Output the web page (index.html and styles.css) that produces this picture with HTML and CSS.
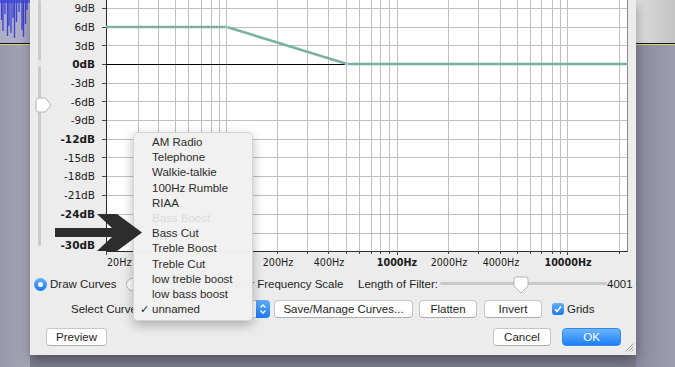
FILE: index.html
```html
<!DOCTYPE html>
<html lang="en">
<head>
    <meta charset="UTF-8">
    <meta name="viewport" content="width=device-width, initial-scale=1.0">
    <title>Equalization</title>
    <link rel="stylesheet" href="styles.css">
</head>
<body>
<div class="screen">
    <div class="host host-left">
        <div class="lane">
            <svg class="wave" width="30" height="43" viewBox="0 0 30 43">
                <path d="M0 0H30V3H0Z" fill="#5a5fd6"/>
                <path d="M1.5 0V20M3 0V31M5 0V14M7.5 0V36M9 0V26M11 0V33M13 0V18M14.5 0V38M16.5 0V22M19 0V12M22 0V30M23.5 0V37M25.5 0V24M27 0V10"
                      stroke="#3b43d4" stroke-width="1.3"/>
            </svg>
        </div>
        <div class="lane-line"></div>
        <div class="lane-edge"></div>
        <div class="lane-rest"></div>
    </div>

    <div class="dialog">
        <div class="graph-row">
            <div class="gain">
                <div class="gain-track"></div>
                <svg class="gain-thumb" width="17" height="16" viewBox="0 0 17 16">
                    <path d="M1 3.5Q1 1 3.5 1H10.5L16 8L10.5 15H3.5Q1 15 1 12.5Z" fill="#fff" stroke="#b3b3b3"/>
                </svg>
            </div>
            <svg class="plot" width="581" height="272" viewBox="55 0 581 272">
                <rect x="106" y="-1" width="522" height="252" fill="#fff"/>
                <path class="grid" d="M138.5 0V251M158.5 0V251M175.5 0V251M188.5 0V251M201.5 0V251M211.5 0V251M219.5 0V251M226.5 0V251M277.5 0V251M307.5 0V251M328.5 0V251M346.5 0V251M359.5 0V251M371.5 0V251M380.5 0V251M389.5 0V251M397.5 0V251M448.5 0V251M478.5 0V251M500.5 0V251M517.5 0V251M530.5 0V251M541.5 0V251M552.5 0V251M560.5 0V251M567.5 0V251M619.5 0V251
                   M106 8.5H628M106 27.5H628M106 45.5H628M106 83.5H628M106 101.5H628M106 120.5H628M106 139.5H628M106 157.5H628M106 176.5H628M106 195.5H628M106 214.5H628M106 233.5H628"/>
                <path class="frame" d="M627.5 0V251"/>
                <path class="axis" d="M106.5 0V252M106 251.5H628"/>
                <path class="ticks" d="M106.5 251V255M138.5 251V254M158.5 251V254M175.5 251V254M188.5 251V254M201.5 251V254M211.5 251V254M219.5 251V254M226.5 251V255M277.5 251V254M307.5 251V254M328.5 251V254M346.5 251V254M359.5 251V254M371.5 251V254M380.5 251V254M389.5 251V254M397.5 251V255M448.5 251V254M478.5 251V254M500.5 251V254M517.5 251V254M530.5 251V254M541.5 251V254M552.5 251V254M560.5 251V254M567.5 251V255M619.5 251V254
                   M102 8.5H106M102 27.5H106M102 45.5H106M102 64.5H106M102 83.5H106M102 101.5H106M102 120.5H106M102 139.5H106M102 157.5H106M102 176.5H106M102 195.5H106M102 214.5H106M102 233.5H106M102 250.5H106"/>
                <path class="zero" d="M106 64.5H347"/>
                <polyline class="curve" points="106,27 227,27 347,64 628,64"/>
                <circle cx="227" cy="27" r="1.3" fill="#a9c8f0"/>
                <circle cx="347" cy="64" r="1.3" fill="#a9c8f0"/>

                <text x="95" y="8">9dB</text>
                <text x="95" y="27">6dB</text>
                <text x="95" y="45.5">3dB</text>
                <text x="95" y="64" class="b">0dB</text>
                <text x="95" y="83">-3dB</text>
                <text x="95" y="101.5">-6dB</text>
                <text x="95" y="120">-9dB</text>
                <text x="95" y="139" class="b">-12dB</text>
                <text x="95" y="157.5">-15dB</text>
                <text x="95" y="176">-18dB</text>
                <text x="95" y="195">-21dB</text>
                <text x="95" y="214" class="b">-24dB</text>
                <text x="95" y="245" class="b">-30dB</text>

                <text x="107" y="262" class="xl start">20Hz</text>
                <text x="278" y="262" class="xl mid">200Hz</text>
                <text x="329" y="262" class="xl mid">400Hz</text>
                <text x="397" y="262" class="xl mid b">1000Hz</text>
                <text x="449" y="262" class="xl mid">2000Hz</text>
                <text x="501" y="262" class="xl mid">4000Hz</text>
                <text x="568" y="262" class="xl mid b">10000Hz</text>
            </svg>
        </div>

        <div class="row row-mode">
            <span class="radio on"></span>
            <span class="label lbl-draw">Draw Curves</span>
            <span class="radio off"></span>
            <span class="label lbl-graphic"></span>
            <span class="check off"></span>
            <span class="label lbl-linear">Linear Frequency Scale</span>
            <span class="label lbl-length">Length of Filter:</span>
            <div class="filter-slider">
                <div class="filter-track"></div>
                <svg class="filter-thumb" width="16" height="18" viewBox="0 0 16 18">
                    <path d="M1 3.5Q1 1 3.5 1H12.5Q15 1 15 3.5V10L8 17L1 10Z" fill="#fff" stroke="#b3b3b3"/>
                </svg>
            </div>
            <span class="label">4001</span>
        </div>

        <div class="row row-curve">
            <span class="label lbl-select">Select Curve:</span>
            <div class="popup">
                <span class="stepper">
                    <svg width="14" height="18" viewBox="0 0 14 18">
                        <path d="M4.5 7.5L7 5L9.5 7.5M4.5 10.5L7 13L9.5 10.5" fill="none" stroke="#fff" stroke-width="1.3"/>
                    </svg>
                </span>
            </div>
            <button class="btn btn-save">Save/Manage Curves...</button>
            <button class="btn btn-flatten">Flatten</button>
            <button class="btn btn-invert">Invert</button>
            <span class="check on">
                <svg width="12" height="12" viewBox="0 0 12 12">
                    <path d="M3 6.3L5 8.5L9 3.5" fill="none" stroke="#fff" stroke-width="1.5"/>
                </svg>
            </span>
            <span class="label lbl-grids">Grids</span>
        </div>

        <div class="row row-actions">
            <button class="btn btn-preview">Preview</button>
            <button class="btn btn-cancel">Cancel</button>
            <button class="btn btn-ok">OK</button>
        </div>

        <svg class="grip" width="9" height="9" viewBox="0 0 9 9">
            <path d="M8.5 0.5L0.5 8.5M8.5 3.5L3.5 8.5M8.5 6.5L6.5 8.5" stroke="#a0a0a0"/>
        </svg>

        <ul class="curve-menu">
            <li>AM Radio</li>
            <li>Telephone</li>
            <li>Walkie-talkie</li>
            <li>100Hz Rumble</li>
            <li>RIAA</li>
            <li class="disabled">Bass Boost</li>
            <li>Bass Cut</li>
            <li>Treble Boost</li>
            <li>Treble Cut</li>
            <li>low treble boost</li>
            <li>low bass boost</li>
            <li class="checked">unnamed</li>
        </ul>

        <svg class="pointer" width="92" height="42" viewBox="55 212 92 42">
            <polygon points="55,228 112,228 97,214 117,214 142,232.5 117,251 97,251 112,237 55,237" fill="#2d2d2d"/>
        </svg>
    </div>

    <div class="host host-right">
        <div class="lane"></div>
        <div class="lane-line"></div>
        <div class="lane-edge"></div>
        <div class="lane-rest"></div>
    </div>
</div>
</body>
</html>
```

FILE: styles.css
```css
* {
    box-sizing: border-box;
}

body {
    margin: 0;
    font-family: "Liberation Sans", Arial, sans-serif;
    font-size: 11.5px;
    color: #1e1e1e;
}

.screen {
    display: flex;
    width: 675px;
    height: 367px;
    overflow: hidden;
    background: linear-gradient(#8e8e9e, #7d7d8d);
}

/* the audacity window behind the dialog */
.host {
    display: flex;
    flex-direction: column;
    flex: none;
}
.host-left { width: 30px; }
.host-right { width: 39px; }
.lane { height: 43px; }
.host-left .lane { background: #afaec8; }
.host-right .lane { background: linear-gradient(to right, #dedede, #c3c3c3); }
.lane-line { height: 1px; background: #151515; }
.lane-edge { height: 1px; background: #d8d37e; }
.lane-rest { flex: 1; }
.host-left .lane-rest { background: linear-gradient(to right, #9797ac, #a8a8ba); }
.host-right .lane-rest { background: linear-gradient(to right, #8b8ca0, #9b9caf); }
.wave { display: block; }

/* dialog */
.dialog {
    position: relative;
    flex: none;
    width: 606px;
    height: 355px;
    background: #ececec;
    box-shadow: 0 5px 12px rgba(0, 0, 0, 0.35);
}

.graph-row {
    display: flex;
    height: 272px;
}

.gain {
    position: relative;
    width: 25px;
    flex: none;
}
.gain-track {
    width: 3px;
    height: 246px;
    margin-left: 8px;
    border-radius: 2px;
    background: linear-gradient(#cbcbcb 0 60px, #e4e4e4 60px 67px, #cbcbcb 67px);
}
.gain-thumb {
    position: absolute;
    left: 5px;
    top: 97px;
}

.plot {
    display: block;
    flex: none;
}
.plot .grid { stroke: #bfbfbf; stroke-width: 1; fill: none; }
.plot .frame { stroke: #8a8a8a; stroke-width: 1; }
.plot .axis { stroke: #2a2a2a; stroke-width: 1; }
.plot .ticks { stroke: #444; stroke-width: 1; }
.plot .zero { stroke: #000; stroke-width: 1; }
.plot .curve { fill: none; stroke: #7cb0a2; stroke-width: 2.6; }
.plot text {
    font-family: "DejaVu Sans", sans-serif;
    font-size: 10.5px;
    fill: #1b1b1b;
    text-anchor: end;
    dominant-baseline: central;
}
.plot text.xl { font-size: 9.6px; }
.plot text.start { text-anchor: start; }
.plot text.mid { text-anchor: middle; }
.plot text.b { font-weight: bold; }

/* control rows */
.row {
    display: flex;
    align-items: center;
    white-space: nowrap;
}
.row-mode {
    height: 20px;
    margin-top: 2px;
    padding-left: 4px;
}
.row-curve {
    height: 20px;
    margin-top: 5px;
    padding-left: 41px;
}
.row-actions {
    height: 19px;
    margin-top: 8px;
    padding: 0 15px 0 16px;
}

.label { flex: none; }
.lbl-draw { width: 70px; margin-left: 3px; }
.lbl-graphic { width: 62px; margin-left: 3px; }
.lbl-linear { width: 121px; margin-left: 3px; }
.lbl-length { width: 82px; margin-left: 15px; }
.lbl-select { width: 66px; }
.lbl-grids { margin-left: 3px; }

.radio {
    flex: none;
    width: 13px;
    height: 13px;
    border-radius: 50%;
}
.radio.on {
    display: flex;
    align-items: center;
    justify-content: center;
    background: linear-gradient(#62b0fc, #1b78f0);
}
.radio.on::after {
    content: "";
    width: 5px;
    height: 5px;
    border-radius: 50%;
    background: #fff;
}
.radio.off {
    margin-left: 6px;
    background: #fff;
    border: 1px solid #b8b8b8;
}

.check {
    flex: none;
    width: 12px;
    height: 12px;
    border-radius: 3px;
}
.check.off {
    margin-left: 3px;
    background: #fff;
    border: 1px solid #b8b8b8;
}
.check.on {
    margin-left: 10px;
    background: linear-gradient(#62b0fc, #1b78f0);
}
.check svg { display: block; }

.filter-slider {
    position: relative;
    flex: none;
    width: 167px;
    height: 20px;
}
.filter-track {
    height: 3px;
    margin-top: 8px;
    border-radius: 2px;
    background: #c8c8c8;
}
.filter-thumb {
    position: absolute;
    left: 73px;
    top: 2px;
}

.popup {
    display: flex;
    justify-content: flex-end;
    flex: none;
    width: 129px;
    height: 18px;
    margin-left: 4px;
    background: #fff;
    border: 1px solid #c4c4c4;
    border-radius: 4px;
}
.stepper {
    width: 14px;
    height: 18px;
    margin: -1px -1px 0 0;
    border-radius: 0 4px 4px 0;
    background: linear-gradient(#5eabfb, #1d7cf1);
}
.stepper svg { display: block; }

.btn {
    flex: none;
    height: 18px;
    padding: 0;
    font-family: inherit;
    font-size: 11.5px;
    color: #1e1e1e;
    background: #fff;
    border: 1px solid #c6c6c6;
    border-bottom-color: #acacac;
    border-radius: 4px;
}
.btn-save { width: 139px; margin-left: 4px; }
.btn-flatten { width: 58px; margin-left: 6px; }
.btn-invert { width: 58px; margin-left: 7px; }
.btn-preview { width: 61px; }
.btn-cancel { width: 58px; margin-left: auto; }
.btn-ok {
    width: 59px;
    margin-left: 11px;
    color: #fff;
    background: linear-gradient(#6cb4fc, #1b80f5);
    border-color: #3588ee;
}

.grip {
    position: absolute;
    right: 2px;
    bottom: 3px;
}

/* open curve popup menu */
.curve-menu {
    position: absolute;
    left: 103px;
    top: 132px;
    width: 120px;
    margin: 0;
    padding: 2px 0 3px;
    list-style: none;
    background: rgba(241, 241, 241, 0.98);
    border: 1px solid rgba(0, 0, 0, 0.12);
    border-radius: 5px;
    box-shadow: 0 4px 12px rgba(0, 0, 0, 0.28);
}
.curve-menu li {
    position: relative;
    height: 15.2px;
    line-height: 15.2px;
    padding-left: 18px;
    color: #2b2b2b;
}
.curve-menu li.disabled { color: #dadada; }
.curve-menu li.checked::before {
    content: "✓";
    position: absolute;
    left: 6px;
    font-family: "DejaVu Sans", sans-serif;
    font-size: 11px;
}

.pointer {
    position: absolute;
    left: 25px;
    top: 212px;
}
```
